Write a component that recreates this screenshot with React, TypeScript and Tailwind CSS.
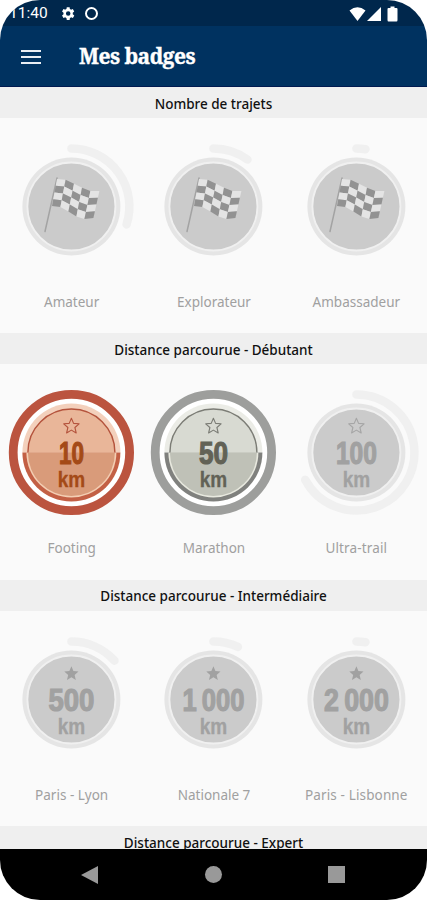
import React from "react";

type Tone = "locked" | "copper" | "silver";

interface Badge {
  label: string;
  labelClass: string;
  tone: Tone;
  sweep: number;
  value?: string;
  valueWidth?: number;
  solidStar?: boolean;
}

interface Section {
  title: string;
  titleClass: string;
  badges: Badge[];
}

const SECTIONS: Section[] = [
  {
    title: "Nombre de trajets",
    titleClass: "tracking-[0em]",
    badges: [
      { label: "Amateur", labelClass: "tracking-[0em]", tone: "locked", sweep: 108 },
      { label: "Explorateur", labelClass: "tracking-[0em]", tone: "locked", sweep: 36 },
      { label: "Ambassadeur", labelClass: "tracking-[0em]", tone: "locked", sweep: 9 },
    ],
  },
  {
    title: "Distance parcourue - Débutant",
    titleClass: "tracking-[0em]",
    badges: [
      { label: "Footing", labelClass: "tracking-[0em]", tone: "copper", sweep: 360, value: "10", valueWidth: 25 },
      { label: "Marathon", labelClass: "tracking-[0em]", tone: "silver", sweep: 360, value: "50", valueWidth: 29 },
      { label: "Ultra-trail", labelClass: "tracking-[0.01em]", tone: "locked", sweep: 242, value: "100", valueWidth: 41 },
    ],
  },
  {
    title: "Distance parcourue - Intermédiaire",
    titleClass: "tracking-[0em]",
    badges: [
      { label: "Paris - Lyon", labelClass: "tracking-[0em]", tone: "locked", sweep: 48, value: "500", valueWidth: 46, solidStar: true },
      { label: "Nationale 7", labelClass: "tracking-[0em]", tone: "locked", sweep: 25, value: "1\u2009000", valueWidth: 62, solidStar: true },
      { label: "Paris - Lisbonne", labelClass: "tracking-[0.01em]", tone: "locked", sweep: 9, value: "2\u2009000", valueWidth: 65, solidStar: true },
    ],
  },
];

const TONES = {
  locked: { ring: "#f0f0f0", text: "#a1a1a1", line: "#a6a6a6" },
  copper: { ring: "#bb543f", text: "#a44a17", line: "#b4533c" },
  silver: { ring: "#9d9e9c", text: "#626256", line: "#7b7c75" },
};

function polar(deg: number, r: number) {
  const a = (deg * Math.PI) / 180;
  return `${(r * Math.sin(a)).toFixed(2)} ${(-r * Math.cos(a)).toFixed(2)}`;
}

const FLAG_TOP = [[-14.4, -27.6], [-5.8, -26.8], [2.6, -22.8], [10.6, -18.8], [19, -15.5], [28, -15.4]];
const FLAG_BOTTOM = [[-19.4, -0.4], [-11, 0.6], [-3, 5], [5, 10], [13, 12.4], [22, 11.4]];

function flagPoint(col: number, row: number) {
  const [ax, ay] = FLAG_TOP[col];
  const [bx, by] = FLAG_BOTTOM[col];
  const t = row / 4;
  return `${ax + (bx - ax) * t},${ay + (by - ay) * t}`;
}

function Flag() {
  return (
    <g>
      <path d="M-14.4 -28.4 L-26.4 25" stroke="#a3a3a3" strokeWidth="1.5" strokeLinecap="round" />
      {[0, 1, 2, 3].map((row) =>
        [0, 1, 2, 3, 4].map((col) => (
          <polygon
            key={`${row}-${col}`}
            points={[flagPoint(col, row), flagPoint(col + 1, row), flagPoint(col + 1, row + 1), flagPoint(col, row + 1)].join(" ")}
            fill={(row + col) % 2 ? "#929292" : "#e4e4e4"}
          />
        )),
      )}
    </g>
  );
}

const STAR = "M0 -7.8 L2.2 -2.6 L7.7 -2.2 L3.5 1.5 L4.8 7 L0 4.1 L-4.8 7 L-3.5 1.5 L-7.7 -2.2 L-2.2 -2.6Z";

function Medal({ badge }: { badge: Badge }) {
  const t = TONES[badge.tone];
  const copper = badge.tone === "copper";
  return (
    <svg viewBox="-71.4 -71.5 142 142" className="block h-[142px] w-[142px]" fill="none">
      {badge.tone === "locked" ? (
        <>
          <path
            d={`M${polar(0, 58)} A58 58 0 ${badge.sweep > 180 ? 1 : 0} 1 ${polar(badge.sweep, 58)}`}
            stroke={t.ring}
            strokeWidth="8.5"
            strokeLinecap="round"
          />
          <circle r="49" fill="#e5e5e5" />
          <circle r="44" fill="#cbcbcb" stroke="#f0f0f0" strokeWidth="1.8" />
        </>
      ) : (
        <>
          <circle r="58.2" fill="#fff" stroke={t.ring} strokeWidth="8.8" />
          <path d="M-49 0 A49 49 0 0 1 49 0Z" fill={copper ? "#f3d0bc" : "#ebece6"} />
          <path d="M-49 0 A49 49 0 0 0 49 0Z" fill={copper ? "#c36045" : "#80817e"} />
          <path d="M-45 0 A45 45 0 0 0 45 0Z" fill={copper ? "#f3ceb3" : "#e8e9df"} />
          <path d="M-43.5 0 A43.5 43.5 0 0 1 43.5 0Z" fill={copper ? "#e9b699" : "#d8dad2"} />
          <path d="M-43.5 0 A43.5 43.5 0 0 0 43.5 0Z" fill={copper ? "#d99b7a" : "#bfc1b7"} />
          <path d="M-43.5 0 A43.5 43.5 0 0 1 43.5 0" stroke={t.line} strokeWidth="1.4" />
        </>
      )}
      {badge.value ? (
        <>
          <path
            d={STAR}
            transform={badge.solidStar ? "translate(0 -26) scale(.92)" : "translate(0 -26.5)"}
            fill={badge.solidStar ? t.text : "none"}
            stroke={badge.solidStar ? "none" : t.line}
            strokeWidth="1.1"
            strokeLinejoin="round"
          />
          <text
            y="11.5"
            textAnchor="middle"
            textLength={badge.valueWidth}
            lengthAdjust="spacingAndGlyphs"
            fill={t.text}
            stroke={t.text}
            strokeWidth="1.2"
            className="font-['Liberation_Sans_Narrow','Liberation_Sans',sans-serif] text-[31.5px] font-bold"
          >
            {badge.value}
          </text>
          <text
            y="34.8"
            textAnchor="middle"
            textLength="27.5"
            lengthAdjust="spacingAndGlyphs"
            fill={t.text}
            stroke={t.text}
            strokeWidth="0.3"
            className="font-['Liberation_Sans_Narrow','Liberation_Sans',sans-serif] text-[21.5px] font-bold"
          >
            km
          </text>
        </>
      ) : (
        <Flag />
      )}
    </svg>
  );
}

function StatusBar() {
  return (
    <div className="flex h-[26px] shrink-0 items-center bg-[#00274c] pl-[9px] pr-[28px] pt-px text-white">
      <span className="w-[50px] font-[Roboto,sans-serif] text-[15.5px] leading-none">11:40</span>
      <svg viewBox="0 0 24 24" className="h-[17px] w-[17px]" fill="currentColor">
        <path
          fillRule="evenodd"
          d="M19.4 13a7.500 7.500 0 0 0 0-2l2.100-1.700-2-3.500-2.500 1a7.500 7.500 0 0 0-1.700-1L15 3h-4l-.5 2.800a7.500 7.500 0 0 0-1.700 1l-2.500-1-2 3.500L6.400 11a7.500 7.500 0 0 0 0 2l-2.100 1.700 2 3.500 2.500-1a7.500 7.500 0 0 0 1.700 1L11 21h4l.4-2.800a7.500 7.500 0 0 0 1.700-1l2.500 1 2-3.500ZM13 8.800a3.200 3.200 0 1 1 0 6.400 3.200 3.200 0 0 1 0-6.400Z"
        />
      </svg>
      <span className="ml-[9px] h-[13px] w-[13px] rounded-full border-[2.500px] border-white" />
      <svg viewBox="0 0 50 16" className="ml-auto h-4 w-[50px]" fill="currentColor">
        <path d="M.5 4.500 Q8.500-2 16.500 4.500 L8.500 15Z" />
        <path d="M18 15 32 1V15Z" />
        <path d="M41.500.5h4v1.500h2q1 0 1 1V14q0 1.500-1 1.500h-8q-1 0-1-1.500V3q0-1 1-1h2Z" />
      </svg>
    </div>
  );
}

function SectionTitle({ title, className }: { title: string; className: string }) {
  return (
    <h2 className="h-[31px] bg-[#efefef] pt-[6.5px] text-center text-[13.5px] font-medium leading-5 text-[#111]">
      <span className={className}>{title}</span>
    </h2>
  );
}

export default function App() {
  return (
    <div className="h-[900px] w-[427px] bg-white">
      <div className="flex h-full flex-col overflow-hidden rounded-[40px] bg-[#fafafa] font-['Noto_Sans',sans-serif]">
        <StatusBar />
        <header className="flex h-[61px] shrink-0 items-center border-b border-[#001a50] bg-[#003260] pl-[21px] pt-px">
          <button aria-label="Menu" className="flex w-[20px] flex-col gap-[4px]">
            <span className="h-[2px] bg-[#e9eef4]" />
            <span className="h-[2px] bg-[#e9eef4]" />
            <span className="h-[2px] bg-[#e9eef4]" />
          </button>
          <h1 className="ml-[38px] pt-px font-['Noto_Serif','DejaVu_Serif_Condensed','DejaVu_Serif',serif] text-[21px] font-bold tracking-[-0.025em] text-white [-webkit-text-stroke:0.4px_white]">
            Mes badges
          </h1>
        </header>
        <main className="min-h-0 flex-1 overflow-hidden">
          {SECTIONS.map((section) => (
            <section key={section.title} className="h-[246.400px]">
              <SectionTitle title={section.title} className={section.titleClass} />
              <div className="grid grid-cols-3 pt-[17px]">
                {section.badges.map((badge) => (
                  <div key={badge.label} className="flex flex-col items-center">
                    <Medal badge={badge} />
                    <span className="mt-[15px] whitespace-nowrap pl-px text-[13.5px] leading-5 text-[#a0a0a0]">
                      <span className={badge.labelClass}>{badge.label}</span>
                    </span>
                  </div>
                ))}
              </div>
            </section>
          ))}
          <SectionTitle title="Distance parcourue - Expert" className="tracking-[0em]" />
        </main>
        <nav className="flex h-[51px] shrink-0 items-center justify-between bg-black pl-[81px] pr-[82px]">
          <svg viewBox="0 0 17 18" className="h-[18px] w-[17px]">
            <path d="M17 0V18L0 9Z" fill="#999" />
          </svg>
          <span className="h-[17px] w-[17px] rounded-full bg-[#999]" />
          <span className="h-[17px] w-[17px] bg-[#999]" />
        </nav>
      </div>
    </div>
  );
}
